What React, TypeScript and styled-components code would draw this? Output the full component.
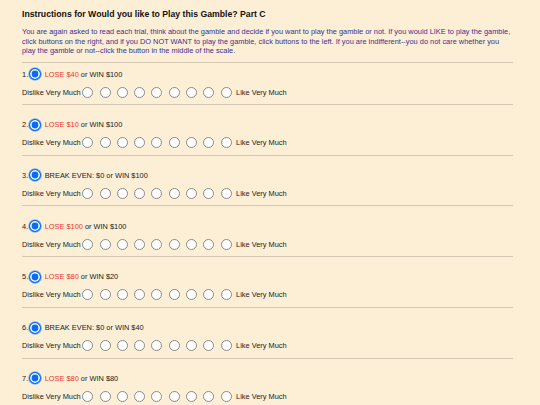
import React from "react";
import styled, { createGlobalStyle } from "styled-components";

const GlobalStyle = createGlobalStyle`
  html, body {
    margin: 0;
    padding: 0;
    background: #fdeed6;
  }
  body {
    font-family: "Liberation Sans", Arial, sans-serif;
    color: #222;
  }
`;

const gambles = [
  { lose: "LOSE $40", win: "WIN $100" },
  { lose: "LOSE $10", win: "WIN $100" },
  { even: "BREAK EVEN: $0", win: "WIN $100" },
  { lose: "LOSE $100", win: "WIN $100" },
  { lose: "LOSE $80", win: "WIN $20" },
  { even: "BREAK EVEN: $0", win: "WIN $40" },
  { lose: "LOSE $80", win: "WIN $80" },
];

const App = () => {
  return (
    <Page>
      <GlobalStyle />
      <Title>Instructions for Would you like to Play this Gamble? Part C</Title>
      <Instructions>
        You are again asked to read each trial, think about the gamble and
        decide if you want to play the gamble or not. If you would LIKE to
        play the gamble, click buttons on the right, and if you DO NOT WANT to
        play the gamble, click buttons to the left. If you are indifferent--you
        do not care whether you play the gamble or not--click the button in
        the middle of the scale.
      </Instructions>
      <Divider />
      {gambles.map((g, i) => (
        <Item key={i} $first={i === 0}>
          <Question>
            <span>{i + 1}.</span>
            <Radio type="radio" checked readOnly $checked />
            <Gamble>
              {g.lose ? <Lose>{g.lose}</Lose> : g.even} or {g.win}
            </Gamble>
          </Question>
          <Scale>
            <ScaleLabel>Dislike Very Much</ScaleLabel>
            <Buttons>
              {Array.from({ length: 9 }).map((_, j) => (
                <Radio key={j} type="radio" name={`q${i}`} />
              ))}
            </Buttons>
            <ScaleLabel $right>Like Very Much</ScaleLabel>
          </Scale>
          <Divider />
        </Item>
      ))}
    </Page>
  );
};

const Page = styled.div`
  padding: 8px 27px 0 22px;
`;

const Title = styled.h1`
  margin: 0;
  font-size: 8.7px;
  line-height: 12px;
  font-weight: bold;
  color: #111;
`;

const Instructions = styled.p`
  margin: 7px 0 6px;
  font-size: 7.4px;
  line-height: 9.7px;
  color: #3a3190;
`;

const Divider = styled.div`
  height: 1px;
  background: #d3c8b4;
`;

const Item = styled.div<{ $first?: boolean }>`
  padding-top: ${({ $first }) => ($first ? "4px" : "12.7px")};
`;

const Question = styled.div`
  display: flex;
  align-items: center;
  height: 14px;
  font-size: 7.4px;
`;

const Gamble = styled.span`
  margin-left: 4px;
`;

const Lose = styled.span`
  color: #e8392f;
`;

const Scale = styled.div`
  display: flex;
  align-items: center;
  height: 14px;
  margin: 4px 0 5px;
  font-size: 7.4px;
`;

const ScaleLabel = styled.span<{ $right?: boolean }>`
  margin-left: ${({ $right }) => ($right ? "4.5px" : "0")};
  margin-right: ${({ $right }) => ($right ? "0" : "1.5px")};
`;

const Buttons = styled.div`
  display: flex;
  gap: 6.3px;
`;

const Radio = styled.input<{ $checked?: boolean }>`
  appearance: none;
  margin: 0;
  box-sizing: border-box;
  border-radius: 50%;
  width: ${({ $checked }) => ($checked ? "12px" : "11px")};
  height: ${({ $checked }) => ($checked ? "12px" : "11px")};
  border: 1px solid ${({ $checked }) => ($checked ? "#0a6df0" : "#8a8a8a")};
  background: ${({ $checked }) => ($checked ? "#0a6df0" : "#fff")};
  box-shadow: ${({ $checked }) =>
    $checked ? "inset 0 0 0 1.6px #fff, 0 0 0 0.8px #7fb0f4" : "none"};
  margin-left: ${({ $checked }) => ($checked ? "0.5px" : "0")};
`;

export default App;
